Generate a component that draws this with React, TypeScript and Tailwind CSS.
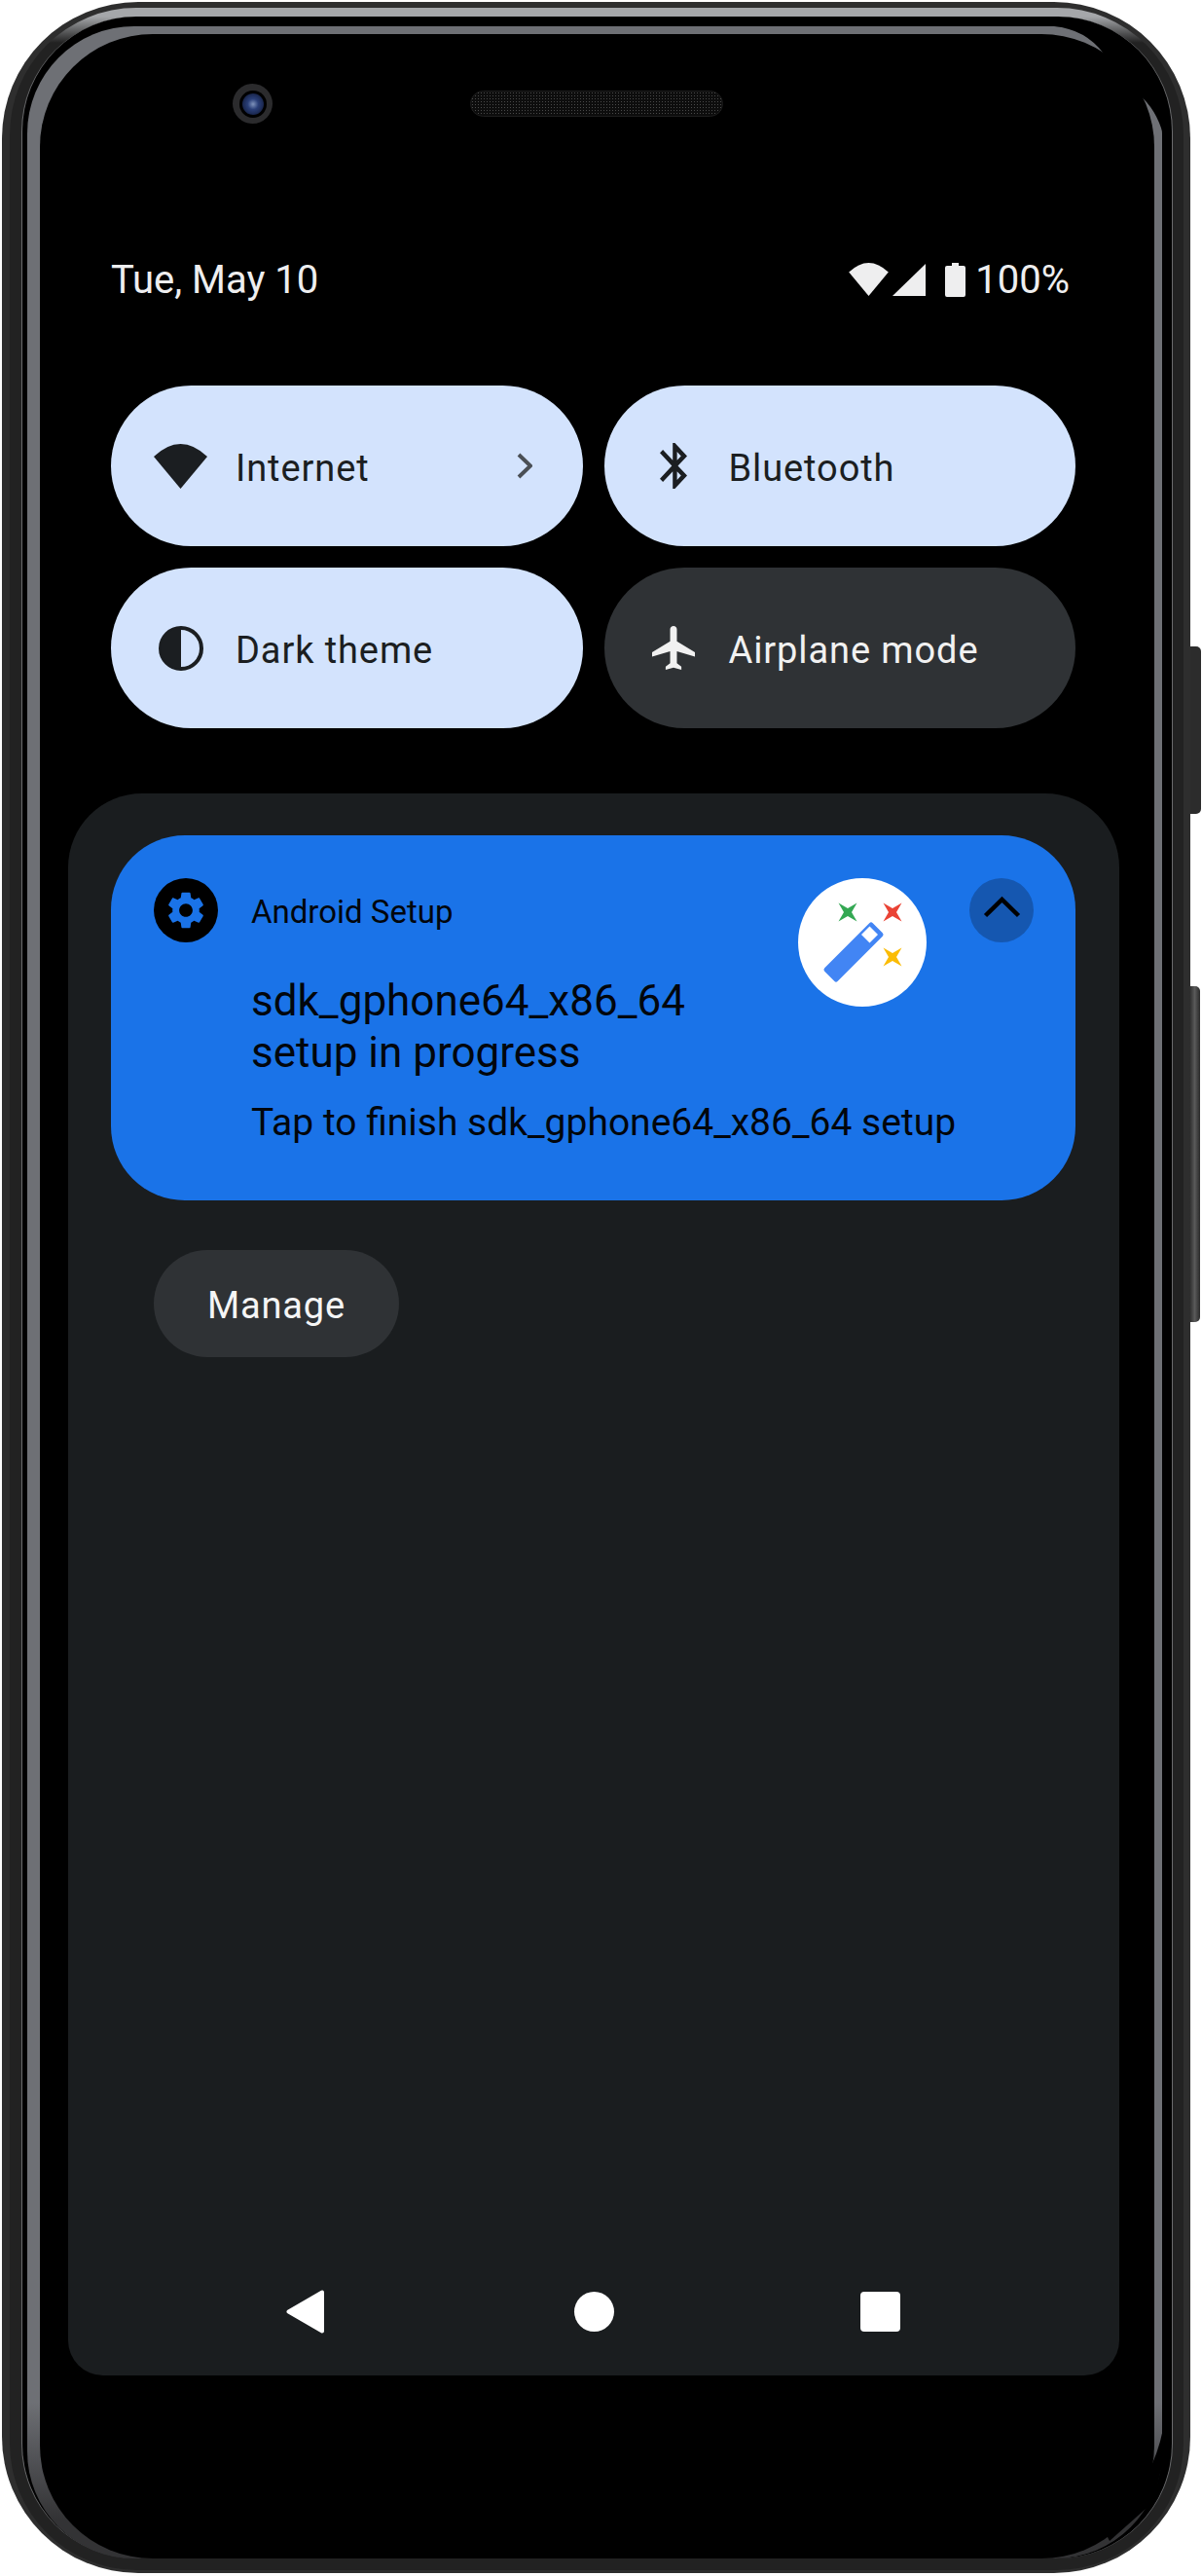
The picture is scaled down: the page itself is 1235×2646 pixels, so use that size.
import { ReactNode } from "react";

const WifiIcon = ({ className }: { className: string }) => (
  <svg viewBox="0 0 55 46" className={className} fill="currentColor">
    <path d="M0 13Q27.5-13 55 13L27.5 46Z" />
  </svg>
);

const GEAR =
  "M19.14 12.94c.04-.3.06-.61.06-.94 0-.32-.02-.64-.07-.94l2.03-1.58c.18-.14.23-.41.12-.61l-1.92-3.32c-.12-.22-.37-.29-.59-.22l-2.39.96c-.5-.38-1.03-.7-1.62-.94l-.36-2.54c-.04-.24-.24-.41-.48-.41h-3.84c-.24 0-.43.17-.47.41l-.36 2.54c-.59.24-1.13.57-1.62.94l-2.39-.96c-.22-.08-.47 0-.59.22L2.74 8.87c-.12.21-.08.47.12.61l2.03 1.58c-.05.3-.09.63-.09.94s.02.64.07.94l-2.03 1.58c-.18.14-.23.41-.12.61l1.92 3.32c.12.22.37.29.59.22l2.39-.96c.5.38 1.03.7 1.62.94l.36 2.54c.05.24.24.41.48.41h3.84c.24 0 .44-.17.47-.41l.36-2.54c.59-.24 1.13-.56 1.62-.94l2.39.96c.22.08.47 0 .59-.22l1.92-3.32c.12-.22.07-.47-.12-.61l-2.01-1.58zM12 15.6c-1.98 0-3.6-1.62-3.6-3.6s1.62-3.6 3.6-3.6 3.6 1.62 3.6 3.6-1.62 3.6-3.6 3.6z";

interface TileProps {
  label: string;
  icon: ReactNode;
  dark?: boolean;
  chevron?: boolean;
}

const Tile = ({ label, icon, dark, chevron }: TileProps) => (
  <div
    className={`flex h-[165px] items-center rounded-full pl-[44px] pr-[52px] text-[38px] tracking-[0.9px] ${
      dark ? "bg-[#2f3235] text-[#f1f1f1]" : "bg-[#d3e3fd] text-[#1b1e21]"
    }`}
  >
    <div className="flex w-[55px] shrink-0 justify-center">{icon}</div>
    <span className="ml-[29px] translate-y-[3px]">{label}</span>
    {chevron && (
      <svg width="16" height="27" viewBox="0 0 16 27" className="ml-auto" fill="none" stroke="#4a4f55" strokeWidth="4">
        <path d="M2 2L14 13.5L2 25" />
      </svg>
    )}
  </div>
);

const Star = ({ x, y, fill }: { x: number; y: number; fill: string }) => (
  <polygon
    fill={fill}
    points={`${x - 9.5},${y - 9.5} ${x},${y - 4} ${x + 9.5},${y - 9.5} ${x + 4},${y} ${x + 9.5},${y + 9.5} ${x},${y + 4} ${x - 9.5},${y + 9.5} ${x - 4},${y}`}
  />
);

const App = () => {
  return (
    <div className="relative flex h-[2646px] w-[1235px] bg-white pl-[2px] pt-[2px] font-[Roboto,sans-serif]">
      {/* phone body */}
      <div className="flex h-[2641px] w-[1221px] shrink-0 rounded-[140px] bg-[#2e2e2e] pb-[3px] pl-[8px] pr-[7px] pt-[6px]">
        <div className="flex flex-1 rounded-[130px] bg-[linear-gradient(#a5a7aa_0,#a5a7aa_9px,#222222_36px)] pb-[12px] pl-[12px] pr-[11px] pt-[9px]">
          <div className="flex flex-1 rounded-[118px] border-x border-x-[#6a6b6d] bg-black pl-[5px] pr-[10px] pt-[10px]">
            <div className="flex flex-1 rounded-[110px] bg-[linear-gradient(#6e7075_0,#6e7075_2440px,#333335_2560px)] pl-[13px] pr-[8px] pt-[8px]">
              {/* screen */}
              <div className="flex flex-1 flex-col rounded-[116px] bg-black pl-[29px] pr-[36px] pt-[51px]">
                <div className="flex h-[41px] items-center pl-[169px]">
                  <div className="flex h-[41px] w-[41px] items-center justify-center rounded-full bg-[#2b2b2d]">
                    <div className="flex h-[28px] w-[28px] items-center justify-center rounded-full bg-black">
                      <div className="h-[22px] w-[22px] rounded-full bg-[radial-gradient(circle,#7f93bb_0,#2a3f78_35%,#0b1128_100%)]" />
                    </div>
                  </div>
                  <div className="ml-[203px] h-[27px] w-[260px] rounded-full border border-[#1d1d1d] bg-[radial-gradient(#4a4a4a_1px,#0d0d0d_1px)] bg-[length:3px_3px]" />
                </div>

                <div className="mt-[135px] flex h-[50px] items-center pl-[44px] pr-[51px] text-[40px] text-[#eeeeef]">
                  <span className="translate-y-[1px]">Tue, May 10</span>
                  <WifiIcon className="ml-auto h-[34px] w-[41px]" />
                  <svg width="34" height="33" viewBox="0 0 34 33" className="ml-[4px]" fill="currentColor">
                    <polygon points="0,33 34,33 34,0" />
                  </svg>
                  <svg width="21" height="35" viewBox="0 0 21 35" className="ml-[20px]" fill="currentColor">
                    <path d="M7 0h7v3h5a2 2 0 0 1 2 2v28a2 2 0 0 1-2 2H2a2 2 0 0 1-2-2V5a2 2 0 0 1 2-2h5z" />
                  </svg>
                  <span className="ml-[10px] translate-y-[1px]">100%</span>
                </div>

                <div className="mt-[84px] grid grid-cols-2 gap-[22px] pl-[44px] pr-[45px]">
                  <Tile label="Internet" chevron icon={<WifiIcon className="h-[46px] w-[55px] text-[#1b1e21]" />} />
                  <Tile
                    label="Bluetooth"
                    icon={
                      <svg width="28" height="47" viewBox="5 2 12.71 20" preserveAspectRatio="none" fill="#1b1e21">
                        <path d="M17.71 7.71L12 2h-1v7.59L6.41 5 5 6.41 10.59 12 5 17.59 6.41 19 11 14.41V22h1l5.71-5.71-4.3-4.29 4.3-4.29zM13 5.83l1.88 1.88L13 9.59V5.83zm1.88 10.46L13 18.17v-3.76l1.88 1.88z" />
                      </svg>
                    }
                  />
                  <Tile
                    label="Dark theme"
                    icon={
                      <svg width="46" height="46" viewBox="0 0 46 46">
                        <circle cx="23" cy="23" r="21" fill="none" stroke="#1b1e21" strokeWidth="4" />
                        <path d="M23 2a21 21 0 0 0 0 42z" fill="#1b1e21" />
                      </svg>
                    }
                  />
                  <Tile
                    label="Airplane mode"
                    dark
                    icon={
                      <svg width="44" height="45" viewBox="2 2 19 20" preserveAspectRatio="none" fill="#f1f1f1">
                        <path d="M21 16v-2l-8-5V3.5c0-.83-.67-1.5-1.5-1.5S10 2.67 10 3.5V9l-8 5v2l8-2.5V19l-2 1.5V22l3.5-1 3.5 1v-1.5L13 19v-5.5l8 2.5z" />
                      </svg>
                    }
                  />
                </div>

                {/* notification shade */}
                <div className="mt-[67px] flex h-[1625px] flex-col rounded-b-[36px] rounded-t-[76px] bg-[#1a1d1f] pb-[43px] pl-[44px] pr-[45px] pt-[43px]">
                  <div className="flex h-[375px] rounded-[76px] bg-[#1a73e8] pl-[44px] pr-[43px] pt-[44px] text-[#02060c]">
                    <div className="flex h-[66px] w-[66px] shrink-0 items-center justify-center rounded-full bg-black">
                      <svg width="36" height="38" viewBox="2.6 2 18.8 20" preserveAspectRatio="none" fill="#1a73e8">
                        <path d={GEAR} />
                      </svg>
                    </div>
                    <div className="ml-[34px] flex w-[562px] shrink-0 flex-col whitespace-nowrap">
                      <div className="flex h-[66px] items-center pt-[3px] text-[33px]">Android Setup</div>
                      <div className="mt-[34px] text-[44px] leading-[53px]">
                        sdk_gphone64_x86_64
                        <br />
                        setup in progress
                      </div>
                      <div className="mt-[20px] text-[39px] leading-[50px]">Tap to finish sdk_gphone64_x86_64 setup</div>
                    </div>
                    <svg width="132" height="132" viewBox="0 0 132 132" className="shrink-0">
                      <circle cx="66" cy="66" r="66" fill="#ffffff" />
                      <Star x={51} y={35} fill="#34a853" />
                      <Star x={97} y={35} fill="#ea4335" />
                      <Star x={97} y={81} fill="#fbbc04" />
                      <polygon points="75,48 85,58 39,104 29,94" fill="#4285f4" stroke="#4285f4" strokeWidth="5" strokeLinejoin="round" />
                      <polygon points="73.5,49.5 82,58 73.5,66.5 65,58" fill="#ffffff" />
                    </svg>
                    <div className="ml-[44px] flex h-[66px] w-[66px] shrink-0 items-center justify-center rounded-full bg-[#1557b0]">
                      <svg width="66" height="66" viewBox="0 0 66 66" fill="none" stroke="#000000" strokeWidth="4.5">
                        <path d="M16.5 38.5L33.5 22L50.5 38.5" />
                      </svg>
                    </div>
                  </div>

                  <div className="ml-[44px] mt-[51px] flex h-[110px] w-[252px] items-center justify-center rounded-full bg-[#2f3235] pt-[5px] text-[38px] tracking-[0.8px] text-[#f5f5f5]">
                    Manage
                  </div>

                  <div className="mt-auto flex items-center pl-[180px]">
                    <svg width="39" height="45" viewBox="0 0 39 45" fill="#ffffff" stroke="#ffffff" strokeWidth="4" strokeLinejoin="round">
                      <polygon points="2.5,22.5 37,2.5 37,42.5" />
                    </svg>
                    <div className="ml-[257px] h-[41px] w-[41px] rounded-full bg-white" />
                    <div className="ml-[253px] h-[41px] w-[41px] rounded-[4px] bg-white" />
                  </div>
                </div>
              </div>
            </div>
          </div>
        </div>
      </div>

      {/* side buttons */}
      <div className="flex w-[12px] flex-col pt-[662px]">
        <div className="h-[172px] w-[11px] rounded-r-[5px] bg-[#2c2c2c]" />
        <div className="-ml-[1px] mt-[177px] h-[345px] w-[11px] rounded-r-[5px] bg-[linear-gradient(90deg,#2a2a2a,#5a5a5a_50%,#2a2a2a)]" />
      </div>

      {/* glass reflection gaps on the right-hand corners of the bezel */}
      <svg width="1235" height="2646" viewBox="0 0 1235 2646" className="pointer-events-none absolute left-0 top-0" fill="#000000">
        <path d="M1083 27Q1115 30 1134 55L1170 97Q1188 112 1195 138L1196 100L1180 72L1158 48L1125 28L1090 24Z" />
        <path d="M1195 2495Q1188 2530 1170 2555L1130 2590L1140 2610L1185 2570L1197 2520Z" />
      </svg>
    </div>
  );
};

export default App;
